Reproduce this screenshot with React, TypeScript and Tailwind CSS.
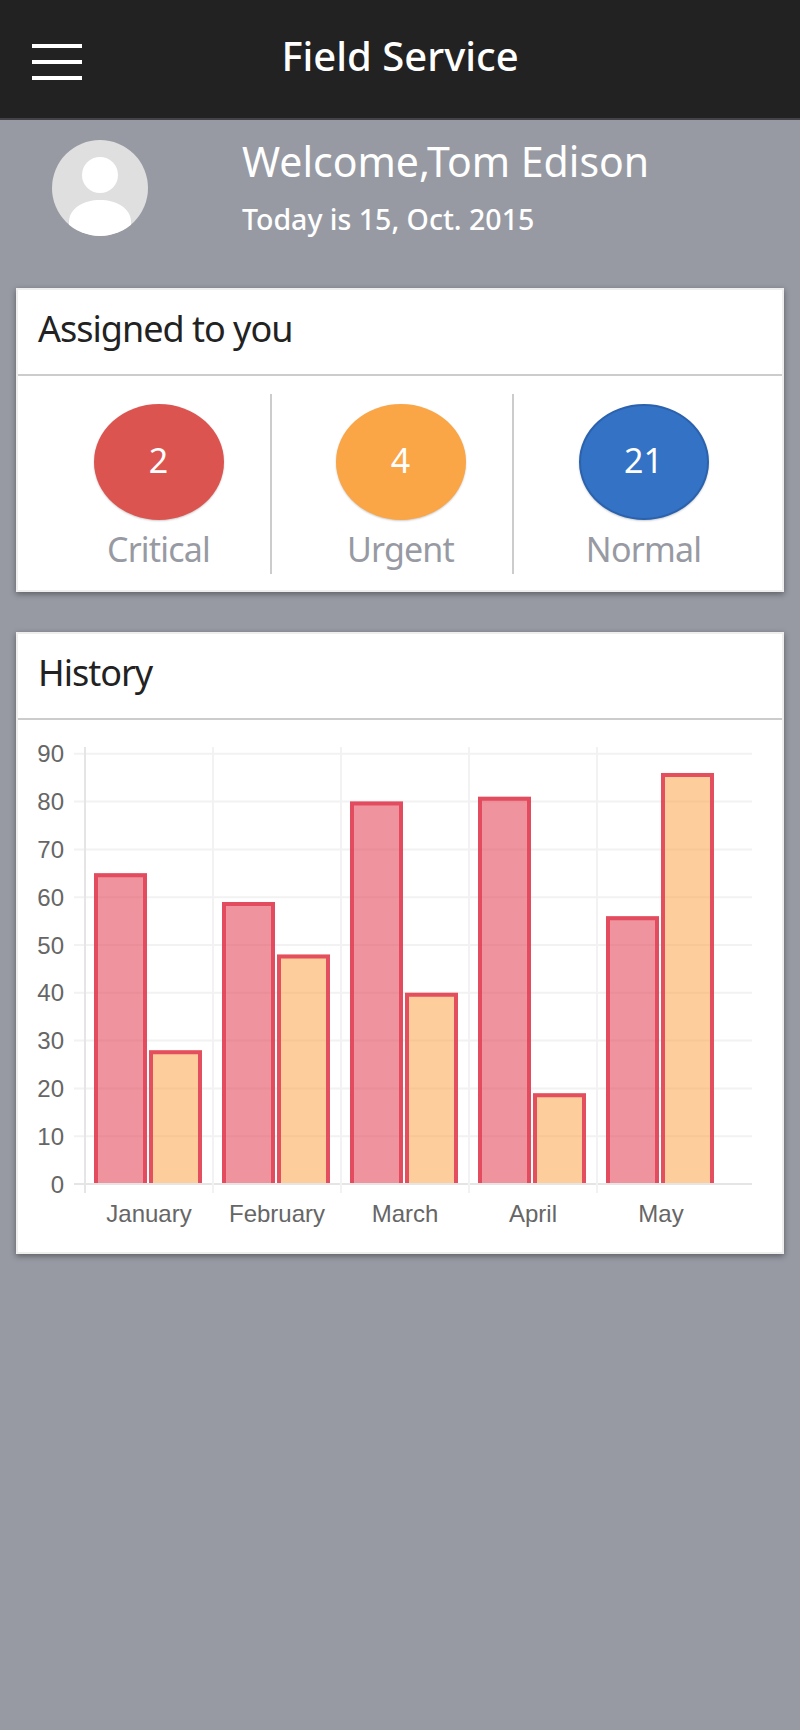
const months = [
  { name: "January", a: 65, b: 28 },
  { name: "February", a: 59, b: 48 },
  { name: "March", a: 80, b: 40 },
  { name: "April", a: 81, b: 19 },
  { name: "May", a: 56, b: 86 },
];

const counts = [
  { label: "Critical", value: 2, circle: "bg-[#dc5450]" },
  { label: "Urgent", value: 4, circle: "bg-[#faa546]" },
  { label: "Normal", value: 21, circle: "bg-[#3372c4] border-2 border-[#2b62ad]" },
];

// chart coordinates are page pixels, the svg sits at (18, 721)
const ZERO_Y = 1185;
const UNIT = 4.78;

function Avatar() {
  return (
    <svg width="96" height="96" viewBox="0 0 96 96">
      <defs>
        <clipPath id="avatar-clip">
          <circle cx="48" cy="48" r="48" />
        </clipPath>
      </defs>
      <circle cx="48" cy="48" r="48" fill="#dfdfdf" />
      <g clipPath="url(#avatar-clip)">
        <circle cx="48" cy="35" r="18" fill="#fff" />
        <path d="M17 96V82C17 68 32 60 48 60C64 60 79 68 79 82V96Z" fill="#fff" />
      </g>
    </svg>
  );
}

// bar with a border on the top and both sides, none along the axis
function Bar({ x, value, fill }: { x: number; value: number; fill: string }) {
  const top = ZERO_Y - value * UNIT;
  const bottom = ZERO_Y - 1;
  return (
    <>
      <rect x={x} y={top} width="53" height={bottom - top} fill={fill} />
      <path
        d={`M${x + 2} ${bottom}V${top + 2}H${x + 51}V${bottom}`}
        fill="none"
        stroke="#e2485c"
        strokeOpacity="0.95"
        strokeWidth="4"
      />
    </>
  );
}

function HistoryChart() {
  const gridLines = [0, 10, 20, 30, 40, 50, 60, 70, 80, 90];
  return (
    <svg width="764" height="532" viewBox="18 721 764 532" className="block">
      {gridLines.map((v) => {
        const y = ZERO_Y - v * UNIT;
        return (
          <g key={v}>
            <line x1="74" x2="752" y1={y} y2={y} stroke={v === 0 ? "#e5e5e5" : "#f2f2f2"} strokeWidth="2" />
            <text x="64" y={y + 8.5} textAnchor="end" fontSize="24" fill="#666" fontFamily="'Liberation Sans', sans-serif">
              {v}
            </text>
          </g>
        );
      })}
      {months.map((m, i) => {
        const x = 85 + i * 128;
        return (
          <line key={m.name} x1={x} x2={x} y1="748" y2="1194" stroke={i === 0 ? "#e5e5e5" : "#f2f2f2"} strokeWidth="2" />
        );
      })}
      {months.map((m, i) => {
        const x = 94 + i * 128;
        return (
          <g key={m.name}>
            <Bar x={x} value={m.a} fill="rgba(228,77,93,0.6)" />
            <Bar x={x + 55} value={m.b} fill="rgba(251,155,55,0.5)" />
            <text x={x + 55} y="1223" textAnchor="middle" fontSize="24" fill="#666" fontFamily="'Liberation Sans', sans-serif">
              {m.name}
            </text>
          </g>
        );
      })}
    </svg>
  );
}

function Card({ title, children }: { title: string; children: React.ReactNode }) {
  return (
    <section className="mx-4 border-2 border-[#eeeeee] bg-white shadow-[0_2px_6px_rgba(0,0,0,0.4)]">
      <h2 className="h-[86px] border-b-2 border-[#cccccc] pl-5 pt-[14px] text-[36px] leading-[50px] font-normal tracking-[-1px] text-[#222222]">
        {title}
      </h2>
      {children}
    </section>
  );
}

export default function App() {
  return (
    <div className="min-h-[1730px] bg-[#979aa3] font-['Noto_Sans',sans-serif]">
      <header className="grid h-[120px] grid-cols-[1fr_auto_1fr] items-center border-b-2 border-[#444448] bg-[#222222]">
        <div className="ml-8 mt-1.5 flex w-[50px] flex-col gap-3">
          <span className="h-1 bg-white" />
          <span className="h-1 bg-white" />
          <span className="h-1 bg-white" />
        </div>
        <h1 className="pb-1.5 text-[40px] leading-[56px] font-medium text-white">Field Service</h1>
      </header>

      <div className="flex h-[168px] items-start pl-[52px] pt-5 text-white">
        <Avatar />
        <div className="ml-[94px] flex flex-col">
          <p className="-mt-1 text-[41px] leading-[50px]">Welcome,Tom Edison</p>
          <p className="mt-[13px] text-[28.5px] leading-[40px] font-medium">Today is 15, Oct. 2015</p>
        </div>
      </div>

      <Card title="Assigned to you">
        <div className="flex h-[214px] pl-3 pt-[18px]">
          {counts.map((c, i) => (
            <div
              key={c.label}
              className={`flex h-[180px] w-[242px] flex-col items-center pl-[17px] pt-[10px] ${
                i < 2 ? "border-r-2 border-[#cccccc]" : ""
              }`}
            >
              <div className={`flex h-[116px] w-[130px] items-center justify-center rounded-[50%] pb-1 text-[34px] text-white shadow-[0_1px_2px_rgba(0,0,0,0.2)] ${c.circle}`}>
                {c.value}
              </div>
              <span className="mt-1.5 text-[34px] leading-[46px] tracking-[-0.8px] text-[#979aa3]">{c.label}</span>
            </div>
          ))}
        </div>
      </Card>

      <div className="h-10" />

      <Card title="History">
        <HistoryChart />
      </Card>
    </div>
  );
}
